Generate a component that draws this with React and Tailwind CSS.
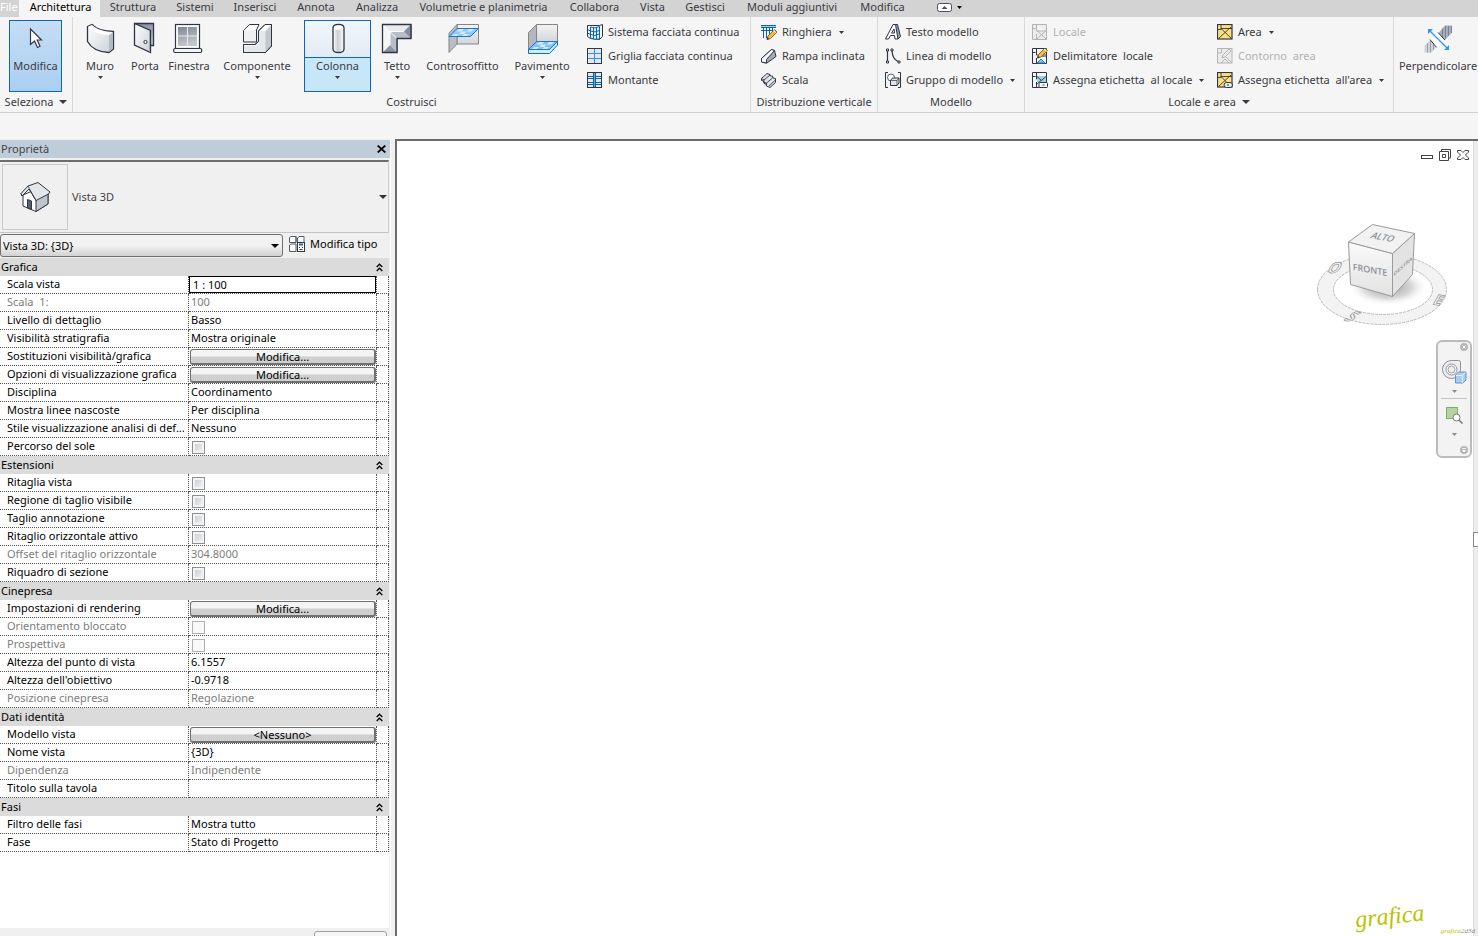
import { useState } from 'react'
import clsx from 'clsx'

const tabs = [
  { label: 'Struttura', width: 'w-[66px]' },
  { label: 'Sistemi', width: 'w-[58px]' },
  { label: 'Inserisci', width: 'w-[62px]' },
  { label: 'Annota', width: 'w-[60px]' },
  { label: 'Analizza', width: 'w-[62px]' },
  { label: 'Volumetrie e planimetria', width: 'w-[151px]' },
  { label: 'Collabora', width: 'w-[71px]' },
  { label: 'Vista', width: 'w-[45px]' },
  { label: 'Gestisci', width: 'w-[60px]' },
  { label: 'Moduli aggiuntivi', width: 'w-[114px]' },
  { label: 'Modifica', width: 'w-[67px]' },
]

const sections = [
  {
    title: 'Grafica',
    rows: [
      { label: 'Scala vista', type: 'input', value: '1 : 100' },
      { label: 'Scala  1:', value: '100', disabled: true },
      { label: 'Livello di dettaglio', value: 'Basso' },
      { label: 'Visibilità stratigrafia', value: 'Mostra originale' },
      { label: 'Sostituzioni visibilità/grafica', type: 'button', value: 'Modifica...' },
      { label: 'Opzioni di visualizzazione grafica', type: 'button', value: 'Modifica...' },
      { label: 'Disciplina', value: 'Coordinamento' },
      { label: 'Mostra linee nascoste', value: 'Per disciplina' },
      { label: 'Stile visualizzazione analisi di def...', value: 'Nessuno' },
      { label: 'Percorso del sole', type: 'check' },
    ],
  },
  {
    title: 'Estensioni',
    rows: [
      { label: 'Ritaglia vista', type: 'check' },
      { label: 'Regione di taglio visibile', type: 'check' },
      { label: 'Taglio annotazione', type: 'check' },
      { label: 'Ritaglio orizzontale attivo', type: 'check' },
      { label: 'Offset del ritaglio orizzontale', value: '304.8000', disabled: true },
      { label: 'Riquadro di sezione', type: 'check' },
    ],
  },
  {
    title: 'Cinepresa',
    rows: [
      { label: 'Impostazioni di rendering', type: 'button', value: 'Modifica...' },
      { label: 'Orientamento bloccato', type: 'check', disabled: true },
      { label: 'Prospettiva', type: 'check', disabled: true },
      { label: 'Altezza del punto di vista', value: '6.1557' },
      { label: "Altezza dell'obiettivo", value: '-0.9718' },
      { label: 'Posizione cinepresa', value: 'Regolazione', disabled: true },
    ],
  },
  {
    title: 'Dati identità',
    rows: [
      { label: 'Modello vista', type: 'button', value: '<Nessuno>' },
      { label: 'Nome vista', value: '{3D}' },
      { label: 'Dipendenza', value: 'Indipendente', disabled: true },
      { label: 'Titolo sulla tavola', value: '' },
    ],
  },
  {
    title: 'Fasi',
    rows: [
      { label: 'Filtro delle fasi', value: 'Mostra tutto' },
      { label: 'Fase', value: 'Stato di Progetto' },
    ],
  },
]

function Svg({ size = 16, children, className }) {
  return (
    <svg
      width={size}
      height={size}
      viewBox={`0 0 ${size} ${size}`}
      fill="none"
      stroke="#2f3542"
      className={clsx('shrink-0', className)}
      aria-hidden="true"
    >
      {children}
    </svg>
  )
}

function Caret({ className = 'w-[5px] h-[3px]' }) {
  return (
    <svg viewBox="0 0 6 3" preserveAspectRatio="none" className={clsx('shrink-0', className)} aria-hidden="true">
      <path d="M0 0h6L3 3z" fill="currentColor" />
    </svg>
  )
}

/* ---- large ribbon icons, 32px ---- */

function Gradients() {
  return (
    <svg width="0" height="0" className="absolute" aria-hidden="true">
      <defs>
        <linearGradient id="metal" x1="0" y1="0" x2="1" y2="1">
          <stop offset="0" stopColor="#ffffff" />
          <stop offset="1" stopColor="#ccd0d6" />
        </linearGradient>
        <linearGradient id="pane" x1="0" y1="0" x2="0.3" y2="1">
          <stop offset="0" stopColor="#7d8793" />
          <stop offset="1" stopColor="#c3c8cf" />
        </linearGradient>
        <linearGradient id="tube" x1="0" y1="0" x2="1" y2="0">
          <stop offset="0" stopColor="#ffffff" />
          <stop offset="0.45" stopColor="#c9cdd2" />
          <stop offset="1" stopColor="#ffffff" />
        </linearGradient>
        <linearGradient id="sky" x1="0" y1="0" x2="0" y2="1">
          <stop offset="0" stopColor="#f3f3f3" />
          <stop offset="1" stopColor="#d5d6d8" />
        </linearGradient>
      </defs>
    </svg>
  )
}

const CursorIcon = () => (
  <Svg size={32}>
    <path d="M10.500 7v15.500l4-3.500 3 6.500 2.500-1.200-2.800-6.300h4.300z" fill="#fff" stroke="#333947" strokeWidth="1.200" />
  </Svg>
)

const MuroIcon = () => (
  <Svg size={32}>
    <path d="M3.500 4.500 8 2.500C12 7 20 9.500 29.500 9.500V27L25 30.500C15 30 7 26 3.500 19.500z" fill="url(#metal)" strokeWidth="1.300" />
    <path d="M4 5C9 10 16 12.500 24.500 13L29 10C20 10 12 7 8 3z" fill="#fff" stroke="none" />
    <path d="M25 13.500V30l4-3.500V10.500z" fill="#b4bac2" stroke="none" />
  </Svg>
)

const PortaIcon = () => (
  <Svg size={32}>
    <path d="M5.500 1.500h19V23.500h-3" fill="url(#pane)" strokeWidth="1.300" />
    <path d="M5.500 1.500 21.500 8.500v22L5.500 23z" fill="url(#metal)" strokeWidth="1.300" />
    <path d="M20.500 9v20.500" stroke="#a2a8b1" />
    <circle cx="16.500" cy="20" r="1.600" fill="#fff" />
  </Svg>
)

const FinestraIcon = () => (
  <Svg size={32}>
    <rect x="2.500" y="2.500" width="24" height="24" fill="#fff" strokeWidth="1.200" />
    <rect x="5" y="5" width="19" height="19" fill="url(#pane)" stroke="none" />
    <path d="M14.500 5v19M5 14h19" stroke="#e9ebee" />
    <rect x="0.700" y="26.500" width="28" height="4" rx="1.500" fill="#f4f5f6" strokeWidth="1.200" />
  </Svg>
)

const ComponenteIcon = () => (
  <Svg size={32}>
    <path d="M2.500 8.500 8.500 2.500h9.500l-2.500 5.500v12h-13z" fill="#eef0f2" />
    <path d="M3 8.500 8.700 3h8.300l-3 5.500z" fill="#fff" stroke="none" />
    <path d="M2.500 22.500H14l3.500-3V9l6.500-6.500h6.500V24l-6 6.500h-22z" fill="#e4e7eb" />
    <path d="M24.500 9.500V30l5.500-6V3.500z" fill="#c2c7ce" stroke="none" />
    <path d="M18 9l6.200-6h5.300l-5.500 6z" fill="#fff" stroke="none" />
    <path d="M3 23.500h12l3-3" stroke="#fff" />
    <path d="M2.500 22.500H14l3.500-3V9l6.500-6.500h6.500V24l-6 6.500h-22z" />
  </Svg>
)

const ColonnaIcon = () => (
  <Svg size={32}>
    <path d="M11 6Q11 2.500 16.500 2.500T22 6v21Q22 30.500 16.500 30.500T11 27z" fill="url(#tube)" strokeWidth="1.300" />
    <ellipse cx="16.500" cy="5.500" rx="4.500" ry="2.300" fill="#fff" stroke="none" />
  </Svg>
)

const TettoIcon = () => (
  <Svg size={32}>
    <path d="M1.500 2.500h28.500v14H16v14H1.500z" fill="#c9ccd2" />
    <path d="M1.500 2.500h28.500L23 9.500H9z" fill="#e9ebed" stroke="none" />
    <path d="M30 2.500v14L23 9.500z" fill="#858d9a" stroke="none" />
    <path d="M1.500 30.500H16L9 23z" fill="#8d95a2" stroke="none" />
    <path d="M1.500 2.500v28L9 23V9.500z" fill="#f5f6f7" stroke="none" />
    <path d="M9 9.500h14l7 7H16v14l-7-7.500z" fill="#b9bec6" stroke="none" />
    <path d="M2 3l14 13.500M23 9.500H9V23" stroke="#fff" />
    <path d="M1.500 2.500h28.500v14H16v14H1.500z" strokeWidth="1.300" />
  </Svg>
)

const ControsoffittoIcon = () => (
  <Svg size={32}>
    <path d="M10 2.500h21.500V22H10z" fill="url(#sky)" stroke="#858585" />
    <path d="M10 2.500V22l-8 8.500V11z" fill="#b9bdc5" stroke="#858585" />
    <path d="M10 6.500h21.500l-8 8H2z" fill="#8cc8f8" stroke="#1979d2" />
    <path d="M12 7h5l-2.500 2.500h-5zM22 7h5l-2.500 2.500h-5zM14.500 9.500h5L17 12h-5zM7 12h5l-2 2H5zM17 12h5l-2 2h-5z" fill="#d3ebfd" stroke="none" />
  </Svg>
)

const PavimentoIcon = () => (
  <Svg size={32}>
    <path d="M10.500 2.500h21v17h-21z" fill="url(#sky)" stroke="#858585" />
    <path d="M10.500 2.500v17l-8 8.500V10.500z" fill="#b3b7bf" stroke="#858585" />
    <path d="M2.500 27.500h21l8-8V23l-8 8.500h-21z" fill="#cfeefa" stroke="#0e6fc4" />
    <path d="M10.500 19.500h21l-8 8h-21z" fill="#7fc1f7" stroke="#1979d2" />
    <path d="M13 20h5l-2.500 2.500h-5zM23 20h5l-2.500 2.500h-5zM15.500 22.500h5L18 25h-5zM8 25h5l-2 2H6zM18 25h5l-2 2h-5z" fill="#d3ebfd" stroke="none" />
  </Svg>
)

const PerpendicolareIcon = () => (
  <Svg size={32}>
    <path d="M23 3.500h7v7.300l-7.500 7.500-6.200-7z" fill="#a8aeb7" stroke="none" />
    <path d="M20.500 6.500v9M23.500 4v13M26.500 4v10M29.500 4v7" stroke="#7b838e" />
    <path d="M8.500 18l6 7-5.500 5.700H2.500v-7.200z" fill="#cfd3d8" stroke="none" />
    <path d="M5.500 21.500v9M8.500 18.500v12M11.500 22v6" stroke="#9ca2ab" />
    <path d="M16.300 10.800l6.400 6.700-8.400 8L8.300 18z" fill="#fff" stroke="none" />
    <path d="M16 10.500l6.800 7.500M8 17.500l6.500 7.800" />
    <path d="M8 9l17 17" stroke="#3394f5" strokeWidth="1.300" />
    <path d="M6 7h5l-5 5zM27 28h-5l5-5z" fill="#3394f5" stroke="none" />
  </Svg>
)

/* ---- small ribbon icons, 16px ---- */

const SistemaIcon = () => (
  <Svg>
    <path d="M.5 1.500h12l3-1v12l-3 3-9-1-3-2z" fill="#f4f6f8" />
    <path d="M3.500 3Q8 5 12.500 2.500v12.500Q8 16 3.500 14z" fill="#e3f2fc" stroke="#0f62ad" />
    <path d="M6.500 4v11M9.500 4v11M.5 5.500l3 1.500q4.500 2 9-.5M.5 9l3 1.500q4.500 2 9-.5" stroke="#0f62ad" />
  </Svg>
)

const GrigliaIcon = () => (
  <Svg>
    <rect x=".5" y=".5" width="14" height="15" fill="#e4e6e9" />
    <path d="M7.500 1v14M1 5.500h13M1 10.500h13" stroke="#3394ee" />
  </Svg>
)

const MontanteIcon = () => (
  <Svg>
    <rect x=".5" y=".5" width="14" height="15" fill="#e4e6e9" />
    <path d="M1 4.500h5M9 4.500h5M1 6.500h5M9 6.500h5M1 10.500h5M9 10.500h5M1 12.500h5M9 12.500h5" stroke="#0f62ad" />
    <path d="M6.500 1v14M8.500 1v14" stroke="#0f62ad" />
    <path d="M7.500 1v14" stroke="#46b1f0" />
  </Svg>
)

const Pencil = ({ x = 0, y = 0 }) => (
  <g transform={`translate(${x} ${y})`}>
    <path d="M0 10l1-3.500L7.500 0l2.500 2.500L3.500 9z" fill="#f9b93a" stroke="#7a4a12" strokeWidth=".8" />
    <path d="M6.500 1 9 3.500" stroke="#fff" />
    <path d="M0 10l.6-2L2 9.300z" fill="#2f3542" stroke="#2f3542" strokeWidth=".5" />
  </g>
)

const RinghieraIcon = () => (
  <Svg>
    <path d="M0 1.500h15" stroke="#0f62ad" />
    <path d="M0 2.500h15" stroke="#8fd3f5" />
    <path d="M0 3.500h15M2.500 4v10M5.500 4v10M8.500 4v7M11.500 4v4M0 6.500h15" stroke="#0f62ad" />
    <Pencil x={6} y={5.5} />
  </Svg>
)

const RampaIcon = () => (
  <Svg>
    <path d="M.5 10.500 10.500 1.500l3 1 1.500 6-9 6.500-4.500-.5z" fill="#a4abb5" />
    <path d="M.5 10.500 10.500 1.500l3 1L5.500 11.500v3.500l-5-1z" fill="#f8f9fa" />
  </Svg>
)

const ScalaIcon = () => (
  <Svg>
    <path d="M.5 6.500 6 1.500l3 1 .5 1.500 2 0 .5 2 2.500.500v4L9 15.500 5.500 14l-.5-2-2-.5-.5-2.500-2-.5z" fill="#e2e4e8" />
    <path d="M3 8 9 3M5.500 11l6-5M8 14l6.500-6M.5 6.500 3 8v2.500l2.500.5v2.500" strokeWidth=".9" />
  </Svg>
)

const TestoIcon = () => (
  <Svg>
    <path d="M9 .5h3.500l3 12-2.500 2.500z" fill="#9aa2ad" />
    <path d="M.5 15 8 .5h2.500L13 15h-3l-.5-3.500H5.500L3.500 15zM6.500 9h3L9 5z" fill="#fff" />
  </Svg>
)

const LineaIcon = () => (
  <Svg>
    <path d="M2.500 3v10M7 3q.5 8 6 10.500" strokeWidth="1.200" />
    <path d="M1.500 1h2v2h-2zM1.500 13h2v2h-2zM6 1h2v2H6zM13 13h2v2h-2z" fill="#fff" />
  </Svg>
)

const GruppoIcon = () => (
  <Svg>
    <path d="M3 .5H.5v15H3M13 .5h2.500v15H13" />
    <circle cx="6" cy="5.500" r="3.500" fill="#fff" stroke="#5a616d" />
    <path d="M5.500 8.500 7.500 6h6.500v5l-2 2.500H5.500z" fill="#e2e5e9" />
    <path d="M5.500 8.500H12v5M12 8.500 14 6" strokeWidth=".7" />
  </Svg>
)

const LocaleBase = ({ stroke = '#2f3542', fill = '#f5f6f7' }) => (
  <path d="M.5.500h14v15H.5zM.5 4.500h3M4.500.500v6.500h10M4.500 10v5" stroke={stroke} fill={fill} />
)

const LocaleIcon = () => (
  <Svg>
    <LocaleBase stroke="#b4b4b4" fill="#ececec" />
    <path d="M4.500 6l10 9.500M14.500 6l-10 9.500" stroke="#b4b4b4" />
  </Svg>
)

const DelimitatoreIcon = () => (
  <Svg>
    <LocaleBase />
    <path d="M5 15l4-4 4 4z" fill="#7ec3f0" stroke="#2a7fc0" />
    <path d="M9 8.500h5" stroke="#46a0ea" />
    <Pencil x={5.500} y={0} />
  </Svg>
)

const EtichettaLocaleIcon = () => (
  <Svg>
    <LocaleBase />
    <path d="M5 4h9v6.500H5z" fill="#9fd2e2" stroke="none" />
    <path d="M5 4.500l4.500 4 4.500-4M5 12l4.500-4" strokeWidth=".9" />
    <rect x="7" y="10.500" width="8.500" height="5" rx="1" fill="#fff" />
    <path d="M10.500 13h2" />
  </Svg>
)

const AreaIcon = () => (
  <Svg>
    <rect x=".5" y=".5" width="14.500" height="14.500" fill="#fde07c" strokeWidth="1.200" />
    <path d="M1 5.500h3V1M4 4.500h11M1.500 14.500 14 3M4 4.500l10.500 10" strokeWidth=".9" />
  </Svg>
)

const ContornoIcon = () => (
  <Svg>
    <rect x=".5" y=".5" width="14.500" height="14.500" fill="#ebebeb" stroke="#b4b4b4" />
    <path d="M.5 5h4V.5M5 10l1-3 6-6 2 2-6 6zM4 15l4-4 4 4M9 9l6 6" stroke="#b4b4b4" />
  </Svg>
)

const EtichettaAreaIcon = () => (
  <Svg>
    <rect x=".5" y=".5" width="14.500" height="14.500" fill="#fde07c" strokeWidth="1.200" />
    <path d="M1 5.500h3V1M4 4.500h11M1.500 14.500 14 3M4 4.500l7 7" strokeWidth=".9" />
    <rect x="7" y="10.500" width="8.500" height="5" rx="2.500" fill="#e4e8f0" />
    <path d="M11 12v2" />
  </Svg>
)

/* ---- ribbon ---- */

function BigButton({ icon, label, caret, width }) {
  return (
    <button type="button" className={clsx('flex h-[72px] shrink-0 flex-col items-center pt-[2px]', width)}>
      {icon}
      <span className="mt-1 leading-4 whitespace-nowrap">{label}</span>
      {caret && <Caret className="mt-[2px] h-[3px] w-[5px]" />}
    </button>
  )
}

function SmallButton({ icon, label, caret, disabled }) {
  return (
    <button
      type="button"
      disabled={disabled}
      className={clsx('flex h-6 items-center gap-[5px] whitespace-pre', disabled && 'text-[#b2b2b2]')}
    >
      {icon}
      <span>{label}</span>
      {caret && <Caret className="ml-[2px] h-[3px] w-[5px]" />}
    </button>
  )
}

function RibbonPanel({ title, caret, width, last, children }) {
  return (
    <section className={clsx('flex shrink-0 flex-col pt-[3px]', width, !last && 'border-r border-[#d9d9d9]')}>
      <div className="flex h-[72px]">{children}</div>
      <h2 className="flex h-5 items-center justify-center gap-[6px] whitespace-nowrap">
        {title}
        {caret && <Caret className="h-[4px] w-[8px]" />}
      </h2>
    </section>
  )
}

function Ribbon() {
  return (
    <header className="text-[#3a3a3f]">
      <nav className="flex h-[17px] items-start overflow-hidden bg-[#d3d3d3] leading-[14px] whitespace-nowrap">
        <button type="button" className="h-full w-[19px] pb-[3px] text-left text-white">File</button>
        <button type="button" className="h-full w-[81px] bg-[#f5f5f5] pr-1 pb-[3px] pl-[6px] text-center text-black">Architettura</button>
        {tabs.map(tab => (
          <button key={tab.label} type="button" className={clsx('h-full shrink-0 pb-[3px] text-center', tab.width)}>
            {tab.label}
          </button>
        ))}
        <button type="button" aria-label="Riduci barra" className="ml-[21px] flex h-[15px] items-center gap-[5px] text-black">
          <svg width="15" height="9" viewBox="0 0 15 9" aria-hidden="true">
            <rect x=".5" y=".5" width="14" height="8" rx="2" fill="#fff" stroke="#4a4f5a" />
            <path d="M4.500 6h6l-3-3z" fill="#4a4f5a" />
          </svg>
          <Caret />
        </button>
      </nav>

      <div className="flex overflow-hidden border-b border-[#cfcfcf] bg-[#f5f5f5]">
        <RibbonPanel title="Seleziona" caret width="w-[73px]">
          <button
            type="button"
            className="ml-[9px] flex h-[72px] w-[53px] flex-col items-center border border-[#0a66c2] bg-linear-to-b from-[#c6ddf5] to-[#aacff0] pt-px"
          >
            <CursorIcon />
            <span className="mt-1 leading-4">Modifica</span>
          </button>
        </RibbonPanel>

        <RibbonPanel title="Costruisci" width="w-[678px]">
          <div className="flex pl-[5px]">
            <BigButton icon={<MuroIcon />} label="Muro" caret width="w-[44px]" />
            <BigButton icon={<PortaIcon />} label="Porta" width="w-[46px]" />
            <BigButton icon={<FinestraIcon />} label="Finestra" width="w-[42px]" />
            <BigButton icon={<ComponenteIcon />} label="Componente" caret width="w-[94px]" />
            <button type="button" className="flex h-[72px] w-[67px] flex-col border border-[#0a66c2] bg-[#c7e7f9]">
              <span className="flex h-[37px] w-full justify-center border-b border-[#0a66c2] bg-linear-to-b from-[#f0f6fd] to-[#e3ebf4] pt-px">
                <ColonnaIcon />
              </span>
              <span className="flex w-full flex-col items-center">
                <span className="leading-4">Colonna</span>
                <Caret className="mt-[2px] h-[3px] w-[5px]" />
              </span>
            </button>
            <BigButton icon={<TettoIcon />} label="Tetto" caret width="w-[52px]" />
            <BigButton icon={<ControsoffittoIcon />} label="Controsoffitto" width="w-[79px]" />
            <BigButton icon={<PavimentoIcon />} label="Pavimento" caret width="w-[80px]" />
          </div>
          <div className="pl-[5px]">
            <SmallButton icon={<SistemaIcon />} label="Sistema facciata continua" />
            <SmallButton icon={<GrigliaIcon />} label="Griglia facciata continua" />
            <SmallButton icon={<MontanteIcon />} label="Montante" />
          </div>
        </RibbonPanel>

        <RibbonPanel title="Distribuzione verticale" width="w-[127px]">
          <div className="pl-[10px]">
            <SmallButton icon={<RinghieraIcon />} label="Ringhiera" caret />
            <SmallButton icon={<RampaIcon />} label="Rampa inclinata" />
            <SmallButton icon={<ScalaIcon />} label="Scala" />
          </div>
        </RibbonPanel>

        <RibbonPanel title="Modello" width="w-[147px]">
          <div className="pl-[7px]">
            <SmallButton icon={<TestoIcon />} label="Testo modello" />
            <SmallButton icon={<LineaIcon />} label="Linea di modello" />
            <SmallButton icon={<GruppoIcon />} label="Gruppo di modello" caret />
          </div>
        </RibbonPanel>

        <RibbonPanel title="Locale e area" caret width="w-[369px]">
          <div className="w-[192px] pl-[7px]">
            <SmallButton icon={<LocaleIcon />} label="Locale" disabled />
            <SmallButton icon={<DelimitatoreIcon />} label="Delimitatore  locale" />
            <SmallButton icon={<EtichettaLocaleIcon />} label="Assegna etichetta  al locale" caret />
          </div>
          <div>
            <SmallButton icon={<AreaIcon />} label="Area" caret />
            <SmallButton icon={<ContornoIcon />} label="Contorno  area" disabled />
            <SmallButton icon={<EtichettaAreaIcon />} label="Assegna etichetta  all'area" caret />
          </div>
        </RibbonPanel>

        <RibbonPanel last width="w-[88px]">
          <BigButton icon={<PerpendicolareIcon />} label="Perpendicolare" width="w-full" />
        </RibbonPanel>
      </div>
    </header>
  )
}

/* ---- properties palette ---- */

function PropertyValue({ row, id }) {
  if (row.type === 'input') {
    return (
      <input
        id={id}
        defaultValue={row.value}
        className="block h-[17px] w-full border border-black bg-white pl-[3px] text-black outline-none"
      />
    )
  }
  if (row.type === 'button') {
    return (
      <button
        id={id}
        type="button"
        className="mx-px mt-px block h-4 w-[186px] rounded-[3px] border border-r-2 border-b-2 border-[#707070] bg-linear-to-b from-[#f4f4f4] from-45% to-[#cfcfcf] to-55% text-center leading-[14px] text-black"
      >
        {row.value}
      </button>
    )
  }
  if (row.type === 'check') {
    return (
      <input
        id={id}
        type="checkbox"
        disabled={row.disabled}
        className={clsx(
          'mt-[3px] ml-[3px] block size-[13px] appearance-none border p-0 checked:bg-[#4a6fa5]',
          row.disabled
            ? 'border-[#b1b1b1] bg-[#f9f9f9]'
            : 'border-[#8e8f8f] bg-linear-to-br from-[#c4c9d0] to-[#f6f6f6] shadow-[inset_0_0_0_2px_#f4f4f4]'
        )}
      />
    )
  }
  return <span className="block pl-[2px]">{row.value}</span>
}

function DoubleChevron() {
  return (
    <svg width="7" height="9" viewBox="0 0 7 9" fill="none" stroke="#000" strokeWidth="1.300" aria-hidden="true">
      <path d="M.7 4l2.800-2.800L6.300 4M.7 8l2.800-2.800L6.300 8" />
    </svg>
  )
}

function PropertySection({ section }) {
  const [open, setOpen] = useState(true)

  return (
    <tbody>
      <tr className="h-[18px] bg-[#dbdbdb]">
        <th colSpan={3} className="p-0 text-left font-normal">
          <button type="button" onClick={() => setOpen(!open)} className="flex h-[18px] w-full items-center justify-between pr-[6px] pl-px">
            <span>{section.title}</span>
            <DoubleChevron />
          </button>
        </th>
      </tr>
      {open && section.rows.map((row, i) => {
        const id = `${section.title}-${i}`.replace(' ', '-')
        return (
          <tr key={row.label} className={clsx('h-[18px]', row.disabled ? 'text-[#7d7d7d]' : 'text-black')}>
            <td className="border-r border-b border-dotted border-[#555] p-0 pl-[7px] align-top whitespace-pre">
              <label htmlFor={row.type ? id : undefined} className="block h-[17px] overflow-hidden leading-4">{row.label}</label>
            </td>
            <td className="border-r border-b border-dotted border-[#555] p-0 align-top">
              <div className="flow-root h-[17px] leading-4"><PropertyValue row={row} id={id} /></div>
            </td>
            <td className="border-r border-b border-dotted border-[#555] p-0" />
          </tr>
        )
      })}
    </tbody>
  )
}

function HouseIcon() {
  return (
    <Svg size={32}>
      <path d="M4 14v11l13 5.500L29 23V12L18 8z" fill="#fff" />
      <path d="M17 18.500v12L29 23V11z" fill="#c0c5cc" />
      <path d="M2 12.500 9 5l10-3.500L31 11l-1.500 2L17 19.500 10 8l-7 7z" fill="#e4e7ea" />
      <path d="M9 5l1.500 3L17 19.500M2 12.500 3 15l7-7" strokeWidth=".8" />
      <path d="M8.500 27v-8.500l4 1.500v8.500z" fill="#5b6370" />
    </Svg>
  )
}

function TypeIcon() {
  return (
    <Svg>
      <path d="M.5 1.500 2 .5h5v6H.5zM8.500 2l1.500-1.500h5V6L14 7M.5 9l1.500-1h5v7.500H.5zM7 .5v6M8.500 2v4.500" fill="#fff" stroke="#555c68" />
      <rect x="8.500" y="6.500" width="7" height="9" fill="#fff" />
      <path d="M10 8.500h4" stroke="#1f5fc0" strokeWidth="2" />
      <path d="M10 11.500h1M13 11.500h1M10.500 13.500h3" />
    </Svg>
  )
}

function PropertiesPanel() {
  return (
    <aside className="flex w-[391px] shrink-0 flex-col border-r border-white bg-[#f0f0f0] pt-px">
      <div className="flex h-[18px] items-center justify-between bg-[#bfccda] pr-1 pl-px text-[#444]">
        <h2>Proprietà</h2>
        <button type="button" aria-label="Chiudi">
          <svg width="9" height="8" viewBox="0 0 9 8" stroke="#000" strokeWidth="1.700" aria-hidden="true">
            <path d="M.7.5l7.600 7M8.300.5.700 7.500" />
          </svg>
        </button>
      </div>

      <div className="mt-[2px] mr-px flex h-[73px] items-center border-t-2 border-r border-b border-t-[#6d6d6d] border-r-[#d0d0d0] border-b-[#c4c4c4] pl-[2px]">
        <div className="flex size-[66px] items-center justify-center border border-[#cacaca]">
          <HouseIcon />
        </div>
        <span className="pl-1 text-[#444]">Vista 3D</span>
        <button type="button" aria-label="Cambia tipo" className="mr-px ml-auto text-[#333]">
          <Caret className="h-[4px] w-[8px]" />
        </button>
      </div>

      <div className="flex h-[25px] items-center">
        <div className="relative w-[283px]">
          <select
            aria-label="Vista"
            className="block h-[23px] w-full appearance-none rounded-[3px] border border-[#707070] bg-linear-to-b from-[#f2f2f2] from-50% to-[#d2d2d2] pl-[2px] text-black"
          >
            <option>{'Vista 3D: {3D}'}</option>
          </select>
          <span className="pointer-events-none absolute top-[10px] right-1 flex">
            <Caret className="h-[4px] w-[8px]" />
          </span>
        </div>
        <button type="button" className="mb-[3px] ml-[6px] flex items-center gap-[5px] whitespace-nowrap text-black">
          <TypeIcon />
          Modifica tipo
        </button>
      </div>

      <div className="mr-px flex-1 bg-white">
        <table className="w-full table-fixed border-separate border-spacing-0">
          <colgroup>
            <col className="w-[189px]" />
            <col />
            <col className="w-[12px]" />
          </colgroup>
          {sections.map(section => (
            <PropertySection key={section.title} section={section} />
          ))}
        </table>
      </div>

      <div className="flex h-2 justify-end overflow-hidden pt-[3px] pr-[3px]">
        <button type="button" aria-label="Applica" className="h-[22px] w-[73px] rounded-[3px] border border-[#a0a0a0] bg-[#f6f6f6]" />
      </div>
    </aside>
  )
}

/* ---- drawing area ---- */

function ViewCube() {
  return (
    <svg width="132" height="106" viewBox="0 0 132 106" fontFamily="Open Sans, sans-serif" aria-hidden="true">
      <defs>
        <radialGradient id="shade">
          <stop offset="0" stopColor="#8f8f8f" />
          <stop offset="0.6" stopColor="#c9c9c9" stopOpacity="0.7" />
          <stop offset="1" stopColor="#fff" stopOpacity="0" />
        </radialGradient>
        <linearGradient id="front" x1="0" y1="0" x2="0" y2="1">
          <stop offset="0" stopColor="#fafafa" />
          <stop offset="1" stopColor="#e2e2e2" />
        </linearGradient>
      </defs>
      <path
        fillRule="evenodd"
        d="M1.500 67.500a64.500 35 0 1 0 129 0a64.500 35 0 1 0-129 0zM17.500 67.500a49.500 25 0 1 0 99 0a49.500 25 0 1 0-99 0z"
        fill="#f3f3f3"
        stroke="#b9b9b9"
        strokeDasharray="3 1"
      />
      <ellipse cx="72" cy="65" rx="40" ry="19" fill="url(#shade)" />
      <path d="M32.500 20 76.500 31.500v43l-42-12z" fill="url(#front)" stroke="#9a9a9a" />
      <path d="M76.500 31.500l22-20-2 41-20 22z" fill="#e3e3e3" stroke="#9a9a9a" />
      <path d="M32.500 20l24-17.500 42 9-22 20z" fill="#f2f2f2" stroke="#9a9a9a" />
      <g fill="#8b9097" fontWeight="600" textAnchor="middle">
        <text fontSize="9" transform="translate(54 51) skewY(10)">FRONTE</text>
        <text fontSize="9" transform="translate(65 18) rotate(10) skewX(-25)">ALTO</text>
        <text fontSize="5" transform="translate(87 46) skewY(-42)">DESTRA</text>
      </g>
      <g fill="#f4f4f4" stroke="#8f8f8f" strokeWidth=".7" fontWeight="700" fontSize="15" textAnchor="middle">
        <text transform="translate(16 51) skewX(-30)">O</text>
        <text transform="translate(31 99) rotate(10) skewX(-40)">S</text>
        <text transform="translate(120 83) rotate(10) skewX(-20)">E</text>
      </g>
    </svg>
  )
}

function NavigationBar() {
  return (
    <div className="flex h-[118px] w-9 flex-col items-center rounded-md border-2 border-[#bcbcbc] bg-[#f3f3f3] text-[#8a8a8a]">
      <button type="button" aria-label="Chiudi barra" className="mt-px mr-[2px] self-end">
        <svg width="8" height="8" viewBox="0 0 8 8" aria-hidden="true">
          <circle cx="4" cy="4" r="4" fill="#b5b5b5" />
          <path d="M2.500 2.500l3 3M5.500 2.500l-3 3" stroke="#fff" />
        </svg>
      </button>
      <button type="button" aria-label="Ruota di navigazione" className="mt-2 flex flex-col items-center">
        <svg width="26" height="25" viewBox="0 0 26 25" fill="none" aria-hidden="true">
          <path d="M10.500 1.500h7q2 0 2 2v7a9 9 0 1 1-9-9z" fill="#eee" stroke="#8b8f98" />
          <circle cx="10.500" cy="10.500" r="5.500" fill="#fff" stroke="#8b8f98" />
          <circle cx="10.500" cy="10.500" r="3.500" fill="#eee" stroke="#9da1a9" />
          <path d="M14.500 16l3-3h7.500v8l-3 3h-7.500z" fill="#a9cdf0" stroke="#5f93c9" />
          <path d="M15 16.500h6.500V24M22 16l2.500-2.500" stroke="#e4f1fc" />
        </svg>
        <Caret className="mt-[6px] h-[3px] w-[5px]" />
      </button>
      <hr className="mt-[5px] w-[26px] border-[#c4c4c4]" />
      <button type="button" aria-label="Zoom" className="mt-[7px] flex flex-col items-center">
        <svg width="18" height="18" viewBox="0 0 18 18" fill="none" aria-hidden="true">
          <rect x="1.500" y="1.500" width="11" height="11" fill="#b8d3a5" stroke="#7fae68" />
          <circle cx="11.500" cy="11.500" r="3.500" fill="#fff" stroke="#777" />
          <path d="M14 14l3.500 3.500" stroke="#777" strokeWidth="1.500" />
        </svg>
        <Caret className="mt-[9px] h-[3px] w-[5px]" />
      </button>
      <button type="button" aria-label="Opzioni" className="mt-auto mr-[2px] mb-[2px] self-end">
        <svg width="8" height="8" viewBox="0 0 8 8" aria-hidden="true">
          <circle cx="4" cy="4" r="4" fill="#b5b5b5" />
          <path d="M2 2.500h4M2.500 4.500h3L4 6z" fill="#fff" stroke="#fff" strokeWidth=".8" />
        </svg>
      </button>
    </div>
  )
}

function WindowControls() {
  return (
    <div className="flex items-center gap-[6px]">
      <button type="button" aria-label="Riduci">
        <svg width="12" height="12" viewBox="0 0 12 12" aria-hidden="true">
          <rect x=".5" y="6.500" width="11" height="3" fill="#fff" stroke="#444" />
        </svg>
      </button>
      <button type="button" aria-label="Ripristina">
        <svg width="12" height="12" viewBox="0 0 12 12" fill="#fff" stroke="#444" aria-hidden="true">
          <path d="M2.500.5h9v8.500h-9z" />
          <path d="M.5 2.500h9v9h-9zM3.500 5.500h3v3h-3z" />
        </svg>
      </button>
      <button type="button" aria-label="Chiudi vista">
        <svg width="12" height="12" viewBox="0 0 12 12" fill="#fff" stroke="#444" aria-hidden="true">
          <path d="M.5 1.500H4l2 2 2-2h3.500v1.500L8.500 6l3 3v1.500H8l-2-2-2 2H.5V9l3-3-3-3z" />
        </svg>
      </button>
    </div>
  )
}

function Viewport() {
  return (
    <main className="relative ml-1 flex min-w-0 flex-1 overflow-hidden border-t-2 border-l-2 border-[#6b6b70] bg-white">
      <div className="flex-1" />
      <div className="w-[5px] border-l border-[#dcdcdc] bg-[#ececec]" />

      <div className="absolute top-2 right-[9px]"><WindowControls /></div>
      <div className="absolute top-[81px] right-[30px]"><ViewCube /></div>
      <div className="absolute top-[199px] right-[6px]"><NavigationBar /></div>
      <div className="absolute top-[391px] right-0 h-[15px] w-[5px] border border-r-0 border-[#888] bg-white" />
      <p className="absolute right-[54px] bottom-0 -rotate-6 font-['Liberation_Serif',serif] text-[24px] leading-10 text-[#b9c400] italic">grafica</p>
      <p className="absolute right-[3px] bottom-0 font-['Liberation_Serif',serif] text-[7px] leading-[9px] text-[#888] italic">
        <span className="text-[#b9c400]">grafica</span>2d3d
      </p>
    </main>
  )
}

export default function App() {
  return (
    <div className="flex h-screen flex-col overflow-hidden bg-[#f5f5f5] font-['Noto_Sans','Open_Sans',sans-serif] text-[11px] leading-4">
      <Gradients />
      <Ribbon />
      <div className="mt-[26px] flex min-h-0 flex-1 bg-[#f0f0f0]">
        <PropertiesPanel />
        <Viewport />
      </div>
    </div>
  )
}
